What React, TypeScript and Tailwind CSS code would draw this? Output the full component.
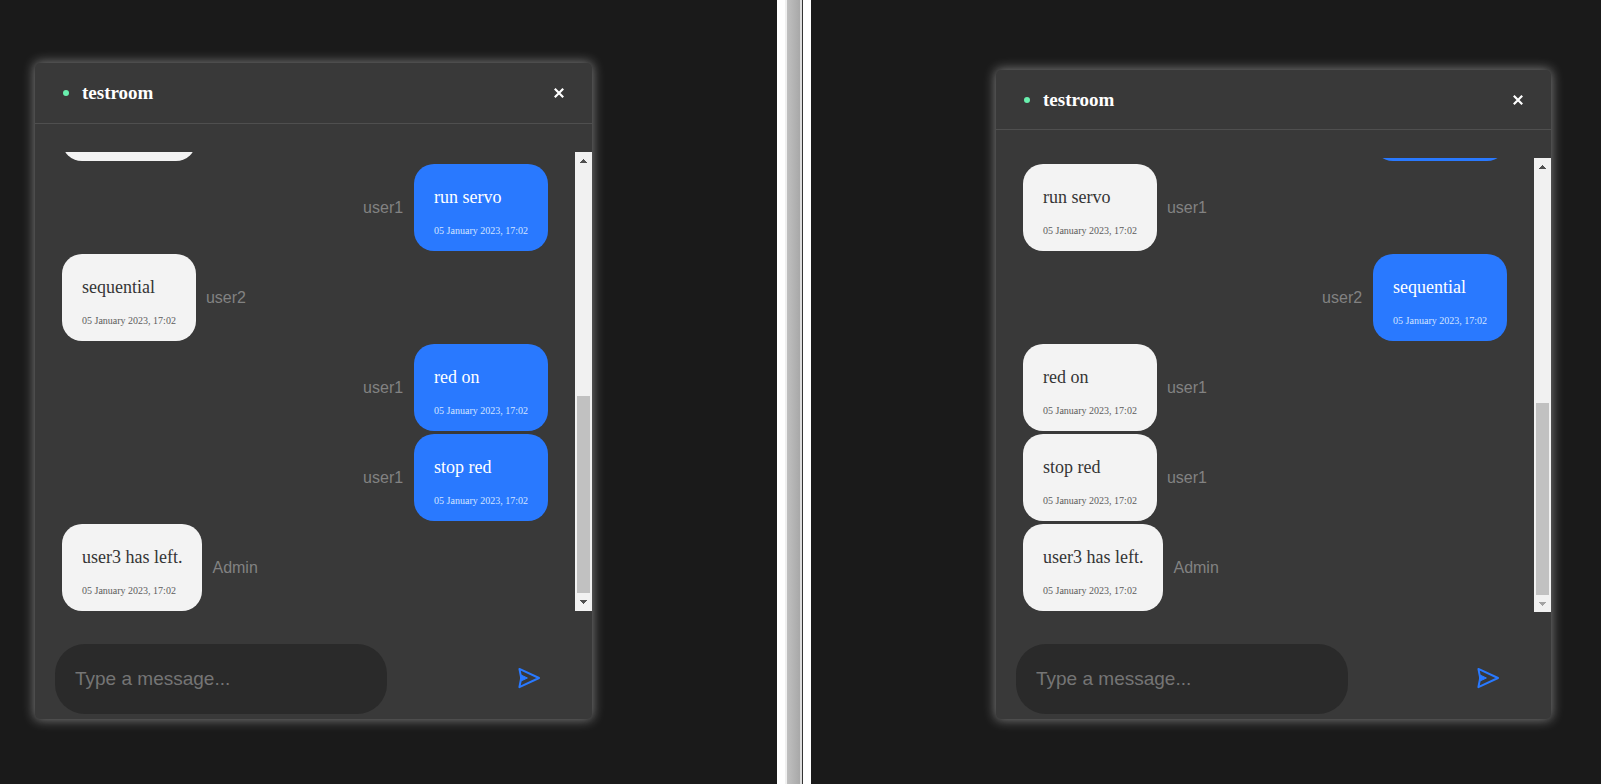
type Message = { user: string; text: string; mine: boolean; scrolledOut?: boolean };

const DATE = "05 January 2023, 17:02";

const leftMessages: Message[] = [
  { user: "user2", text: "stop red", mine: false, scrolledOut: true },
  { user: "user1", text: "run servo", mine: true },
  { user: "user2", text: "sequential", mine: false },
  { user: "user1", text: "red on", mine: true },
  { user: "user1", text: "stop red", mine: true },
  { user: "Admin", text: "user3 has left.", mine: false },
];

const rightMessages: Message[] = [
  { user: "user2", text: "stop red", mine: true, scrolledOut: true },
  { user: "user1", text: "run servo", mine: false },
  { user: "user2", text: "sequential", mine: true },
  { user: "user1", text: "red on", mine: false },
  { user: "user1", text: "stop red", mine: false },
  { user: "Admin", text: "user3 has left.", mine: false },
];

function MessageRow({ user, text, mine, scrolledOut }: Message) {
  // Only the bubble's edge shows for a message scrolled past the top.
  const visibility = scrolledOut ? "invisible" : "";
  return (
    <li className={`flex shrink-0 items-center ${mine ? "flex-row-reverse gap-[11px]" : "gap-[10px]"}`}>
      <div
        className={`rounded-[20px] px-5 pt-[21px] pb-[14px] font-['Liberation_Serif',serif] ${
          mine ? "bg-[#2979ff] text-white" : "bg-[#f3f3f3] text-[#353535]"
        }`}
      >
        <p className={`text-[18px] leading-6 ${visibility}`}>{text}</p>
        <p className={`mt-4 text-[10px] leading-3 ${mine ? "text-[#d4e4ff]" : "text-[#5c5c5c]"} ${visibility}`}>
          {DATE}
        </p>
      </div>
      <span className={`text-[16px] leading-[22px] text-[#828282] ${visibility}`}>{user}</span>
    </li>
  );
}

function ScrollBar({ thumb, atEnd }: { thumb: string; atEnd: boolean }) {
  return (
    <div className="flex w-[17px] shrink-0 flex-col bg-[#f1f1f1]" aria-hidden="true">
      <svg className="h-[17px] w-[17px]" viewBox="0 0 17 17" fill="#505050" shapeRendering="crispEdges">
        <path d="M8 7h1v1h1v1h1v1h1v1H5v-1h1V9h1V8h1z" />
      </svg>
      <div className="flex flex-1 flex-col justify-end px-[2px]">
        <div className={`bg-[#c1c1c1] ${thumb}`} />
      </div>
      <svg
        className={atEnd ? "h-[17px] w-[17px]" : "h-[18px] w-[17px]"}
        viewBox={atEnd ? "0 0 17 17" : "0 0 17 18"}
        fill={atEnd ? "#a3a3a3" : "#505050"}
        shapeRendering="crispEdges"
      >
        <path d="M5 7h7v1h-1v1h-1v1H9v1H8v-1H7V9H6V8H5z" />
      </svg>
    </div>
  );
}

type RoomProps = {
  id: string;
  messages: Message[];
  header: string;
  area: string;
  list: string;
  thumb: string;
  atEnd: boolean;
};

function ChatRoom({ id, messages, header, area, list, thumb, atEnd }: RoomProps) {
  return (
    <section className="flex min-h-0 flex-1 flex-col rounded-[5px] bg-[#393939] shadow-[0_0_12px_1px_rgba(255,255,255,0.42)]">
      <header className={`flex shrink-0 items-center justify-between border-b border-[#4f4f4f] px-7 ${header}`}>
        <div className="flex items-center gap-[13px]">
          <span className="h-[6px] w-[6px] rounded-full bg-[#69f0ae]" />
          <h1 className="font-['Liberation_Serif',serif] text-[19px] leading-6 font-bold text-white">testroom</h1>
        </div>
        <button type="button" aria-label="Close" className="text-white">
          <svg className="h-[10px] w-[10px]" viewBox="0 0 10 10" stroke="currentColor" strokeWidth="2.2">
            <path d="M0.8 0.8 9.2 9.2M9.2 0.8 0.8 9.2" />
          </svg>
        </button>
      </header>

      <div className={`mt-7 flex min-h-0 flex-1 ${area}`}>
        <ul className={`flex min-w-0 flex-1 flex-col justify-end gap-[3px] overflow-hidden px-[27px] ${list}`}>
          {messages.map((message, i) => (
            <MessageRow key={i} {...message} />
          ))}
        </ul>
        <ScrollBar thumb={thumb} atEnd={atEnd} />
      </div>

      <form className="flex shrink-0 items-center justify-between pr-[51px] pb-[5px] pl-5">
        <label htmlFor={id} className="sr-only">
          Message
        </label>
        <input
          id={id}
          type="text"
          placeholder="Type a message..."
          className="h-[70px] w-[332px] rounded-[30px] bg-[#2a2a2a] px-5 text-[19px] text-white outline-none placeholder:text-[#757575]"
        />
        <button type="submit" aria-label="Send" className="pb-[2px] text-[#2979ff]">
          <svg
            className="h-6 w-6"
            viewBox="0 0 24 24"
            fill="none"
            stroke="currentColor"
            strokeWidth="2"
            strokeLinejoin="round"
          >
            <path d="M2.4 2.9 22 12 2.4 21.1 4.2 12z" />
            <path d="M3.6 8.8 10.4 12 3.6 15.2z" fill="currentColor" strokeWidth="1" />
          </svg>
        </button>
      </form>
    </section>
  );
}

export default function App() {
  return (
    <main className="grid h-screen min-h-[500px] grid-cols-[777fr_34px_790fr] bg-[#1a1a1a] font-['Liberation_Sans',Arial,sans-serif]">
      <div className="flex min-h-0 pt-[63px] pr-[185px] pb-[65px] pl-[35px]">
        <ChatRoom
          id="message-left"
          messages={leftMessages}
          header="h-[61px]"
          area="mb-[33px]"
          list="pb-0"
          thumb="h-[197px]"
          atEnd={false}
        />
      </div>
      <div className="flex" aria-hidden="true">
        <div className="w-2 bg-white" />
        <div className="w-[2px] bg-[#f0f0f0]" />
        <div className="w-[13px] bg-linear-to-r from-[#c0c0c0] to-[#a8a8a8]" />
        <div className="w-[2px] bg-[#dcdcdc]" />
        <div className="w-px bg-[#333333]" />
        <div className="w-2 bg-white" />
      </div>
      <div className="flex min-h-0 pt-[70px] pr-[50px] pb-[65px] pl-[185px]">
        <ChatRoom
          id="message-right"
          messages={rightMessages}
          header="h-[60px]"
          area="mb-8"
          list="pb-px"
          thumb="h-[192px]"
          atEnd
        />
      </div>
    </main>
  );
}
